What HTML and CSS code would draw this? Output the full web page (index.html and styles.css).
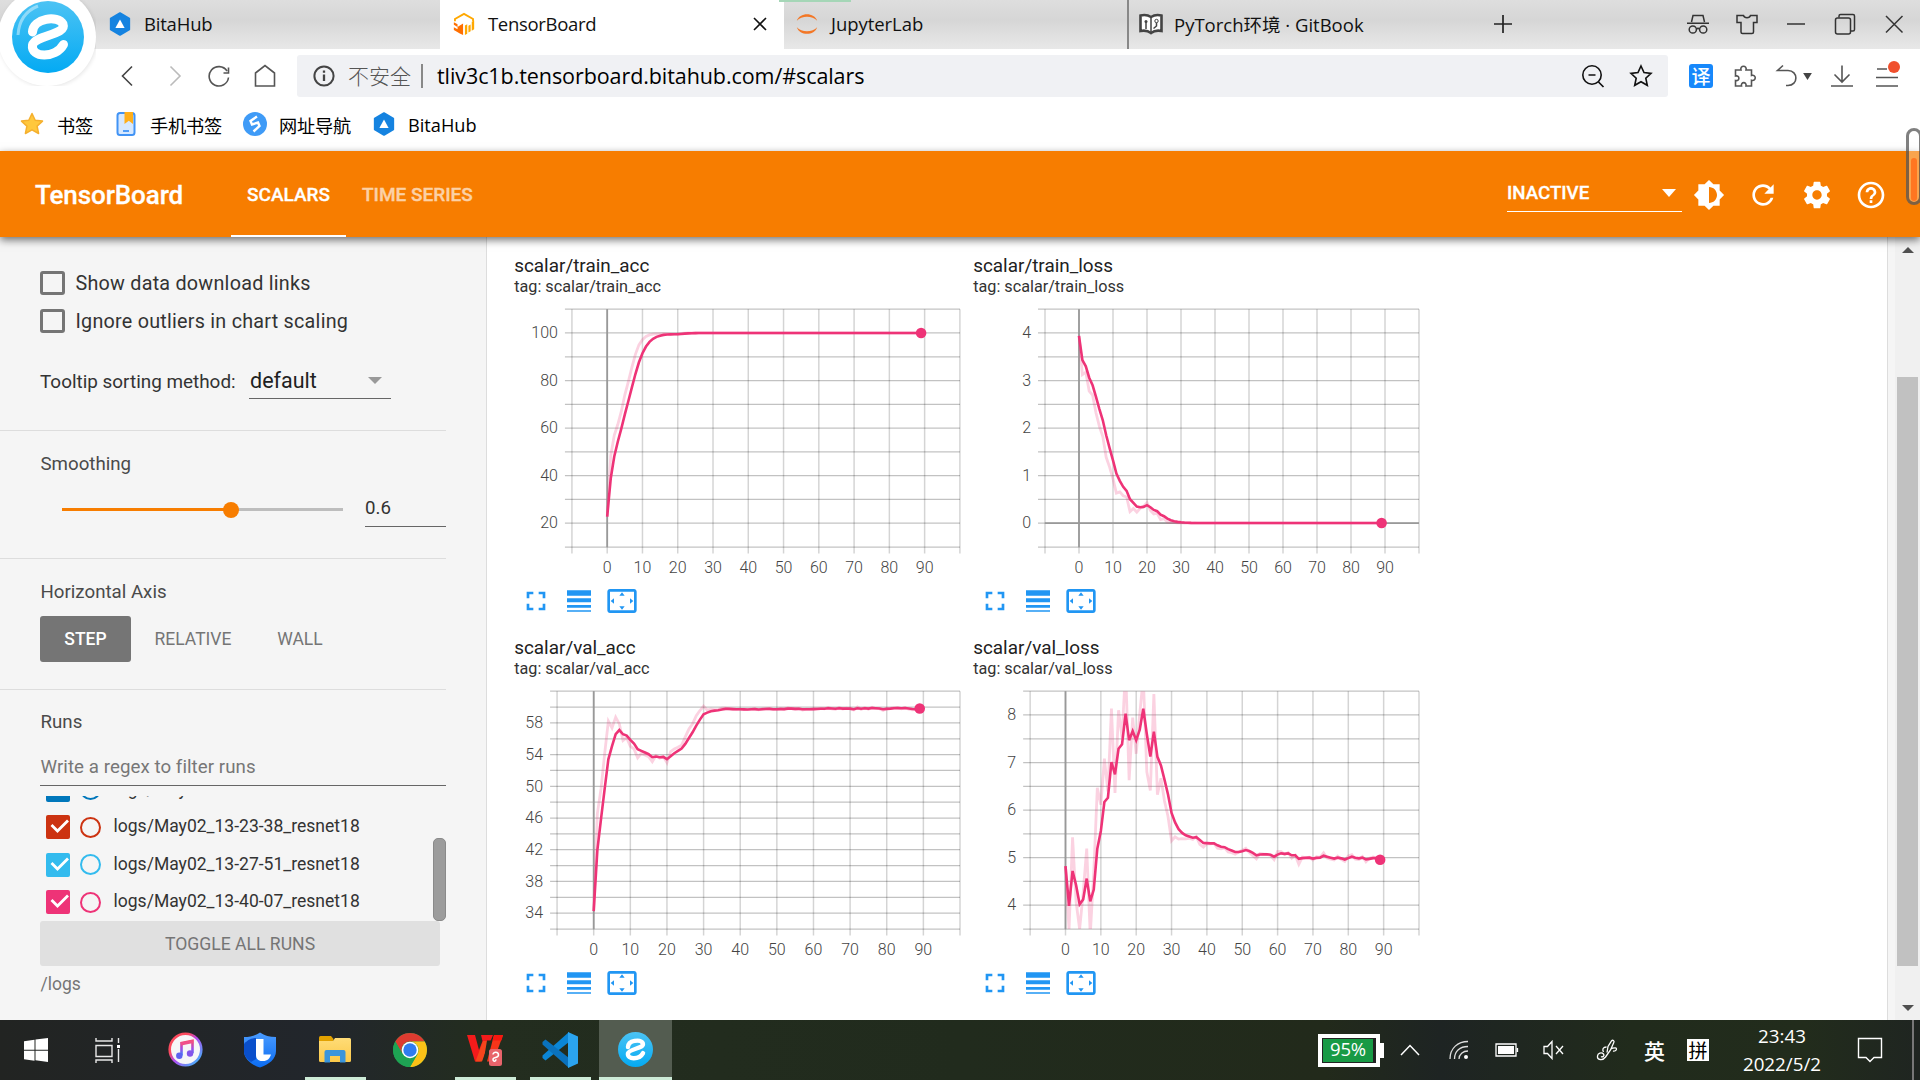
FILE: index.html
```html
<!DOCTYPE html>
<html lang="zh-CN">
<head>
<meta charset="utf-8">
<title>TensorBoard</title>
<link rel="stylesheet" href="styles.css">
</head>
<body>
<svg class="defs" width="0" height="0">
  <defs>
    <linearGradient id="gBlue" x1="0" y1="0" x2="0" y2="1"><stop offset="0" stop-color="#4cc3f4"/><stop offset="1" stop-color="#04aaf3"/></linearGradient>
    <linearGradient id="gMusic" x1="0" y1="0" x2="1" y2="1"><stop offset="0" stop-color="#fb4a5e"/><stop offset=".3" stop-color="#fb4a5e"/><stop offset=".5" stop-color="#b44cf0"/><stop offset="1" stop-color="#2ec5fb"/></linearGradient>
    <linearGradient id="gNote" x1="0" y1="0" x2="0" y2="1"><stop offset="0" stop-color="#f9476a"/><stop offset=".55" stop-color="#a14ce8"/><stop offset="1" stop-color="#2f8df8"/></linearGradient>
    <linearGradient id="gShield" x1="0" y1="0" x2="0" y2="1"><stop offset="0" stop-color="#4a9bff"/><stop offset="1" stop-color="#0b6cf2"/></linearGradient>
    <linearGradient id="gFolder" x1="0" y1="0" x2="0" y2="1"><stop offset="0" stop-color="#ffdc77"/><stop offset="1" stop-color="#fbc94a"/></linearGradient>
  </defs>
  <symbol id="i-full" viewBox="0 0 24 24"><path d="M7 14H5v5h5v-2H7v-3zm-2-4h2V7h3V5H5v5zm12 7h-3v2h5v-5h-2v3zM14 5v2h3v3h2V5h-5z"/></symbol>
  <symbol id="i-lines" viewBox="0 0 24 24"><path d="M3 17h18v-2H3v2zm0 3h18v-1H3v1zm0-7h18v-3H3v3zm0-9v4h18V4H3z"/></symbol>
  <symbol id="i-fit" viewBox="0 0 24 24"><path d="M12.01 5.5L10 8h4l-1.99-2.5zM18 10v4l2.5-1.99L18 10zM6 10l-2.5 2.01L6 14v-4zm8 6h-4l2.01 2.5L14 16zm7-13H3c-1.1 0-2 .9-2 2v14c0 1.1.9 2 2 2h18c1.1 0 2-.9 2-2V5c0-1.1-.9-2-2-2zm0 16.01H3V4.99h18v14.02z"/></symbol>
  <symbol id="i-bita" viewBox="0 0 24 26"><path d="M12 1.2 22 7v12L12 24.8 2 19V7z" fill="#1583e0" stroke="#1583e0" stroke-width="2" stroke-linejoin="round"/><path d="M12 8l5 9.4H7z" fill="#fff"/></symbol>
  <symbol id="i-e" viewBox="0 0 72 72"><circle cx="36" cy="36" r="36" fill="url(#gBlue)"/><path d="M20.500 31C21 17 46 14 51 23 55 34 23 34 20.500 44c-2 13 23 14 31-.5" fill="none" stroke="#fff" stroke-width="9" stroke-linecap="round" stroke-linejoin="round"/></symbol>
</svg>

<div class="screen">
  <header class="tabs">
    <div class="tab tab-first"><svg class="fav" viewBox="0 0 24 26"><use href="#i-bita"/></svg><span>BitaHub</span></div>
    <div class="tab tab-active">
      <svg class="fav" viewBox="0 0 24 26"><path d="M2.200 10V7.500L12 2l9.800 5.500V10" fill="none" stroke="#ffa800" stroke-width="2"/><path d="M1 11l4 2.200v3l2.500-1.700 3.500-2V25l-3.500-1.800L1 19.500v-3l4 2.300v-2.600l-4-2.400z" fill="#ff6f00"/><path d="M13 14.500l2.500-1.300v10.300L13 25zM16.800 15l2.400-1.400v7.200l-2.400 1.500zM20.400 10.500L23 9.200v9.500l-2.600 1.500z" fill="#ffa800"/></svg>
      <span>TensorBoard</span>
      <svg class="tab-close" viewBox="0 0 14 14"><path d="M1 1l12 12M13 1L1 13" stroke="#111" stroke-width="1.6"/></svg>
    </div>
    <div class="tab tab-jupyter"><svg class="fav" viewBox="0 0 24 26"><path d="M1 9.500C4 0 20 0 23 9.500 18 3.800 6 3.800 1 9.500zM1 16.500C4 26 20 26 23 16.500 18 22.200 6 22.200 1 16.500z" fill="#f37726"/></svg><span>JupyterLab</span></div>
    <div class="tab tab-book"><svg class="fav" viewBox="0 0 24 24"><path d="M1.500 3.500c4-1 7.500-.5 10.500 1.500 3-2 6.500-2.500 10.500-1.500v15.500c-4-.8-7.500-.3-10.500 2-3-2.300-6.500-2.800-10.500-2z" fill="#fff" stroke="#444" stroke-width="2.600"/><path d="M12 5v15M7 10v7M17.500 9v5l-3 2.500" stroke="#444" stroke-width="1.500" fill="none"/><circle cx="7" cy="9.500" r="1.500" fill="#444"/><circle cx="17.500" cy="9" r="1.700" fill="#fff" stroke="#444"/></svg><span>PyTorch环境 · GitBook</span></div>
    <div class="tab-new"><svg viewBox="0 0 18 18"><path d="M9 0v18M0 9h18" stroke="#222" stroke-width="1.700"/></svg></div>
    <div class="wincontrols">
      <svg viewBox="0 0 24 24"><g fill="none" stroke="#333" stroke-width="1.500"><path d="M5.500 10 7 3.500h10L18.500 10M1 11.200h22"/><circle cx="6.800" cy="17.500" r="3.600"/><circle cx="17.200" cy="17.500" r="3.600"/><path d="M10.400 17c1-.8 2.200-.8 3.200 0"/></g></svg>
      <svg viewBox="0 0 24 24"><path d="M2 3.500h6.500c1 3 6 3 7 0H22v7h-3.500V20q0 1.500-1.500 1.500H7.500Q6 21.500 6 20v-9.500H2z" fill="none" stroke="#333" stroke-width="1.500"/></svg>
      <svg viewBox="0 0 24 24"><path d="M3 12h18" stroke="#333" stroke-width="1.500"/></svg>
      <svg viewBox="0 0 24 24"><g fill="none" stroke="#333" stroke-width="1.500"><rect x="2.500" y="6" width="15" height="16" rx="2"/><path d="M6 5.500V4q0-1.500 1.500-1.500h12.500q1.500 0 1.500 1.500v13.500q0 1.500-1.500 1.500h-2"/></g></svg>
      <svg viewBox="0 0 24 24"><path d="M4 4l16.500 16.500M20.500 4L4 20.500" stroke="#333" stroke-width="1.500"/></svg>
    </div>
    <i class="load-bar"></i>
  </header>

  <nav class="toolbar">
    <div class="c-back"><svg viewBox="0 0 24 24"><path d="M17 2.500 7.500 12 17 21.500" fill="none" stroke="#444" stroke-width="1.600"/></svg></div>
    <div><svg viewBox="0 0 24 24"><path d="M7.500 2.500 17 12l-9.500 9.500" fill="none" stroke="#bbb" stroke-width="1.600"/></svg></div>
    <div><svg viewBox="0 0 24 24"><path d="M21.500 13.500A9.700 9.700 0 1 1 20 7M21.500 3.500V9h-5" fill="none" stroke="#555" stroke-width="1.600"/></svg></div>
    <div><svg viewBox="0 0 24 24"><path d="M2.500 9 12 1.500 21.500 9v13h-19z" fill="none" stroke="#555" stroke-width="1.600"/></svg></div>
    <div class="urlbar">
      <svg class="info" viewBox="0 0 24 24"><circle cx="12" cy="12" r="9.600" fill="none" stroke="#444" stroke-width="2"/><path d="M12 10.500v6.500M12 6.500v2.200" stroke="#444" stroke-width="2.300"/></svg>
      <span class="insecure">不安全</span><i class="sep"></i><span class="url">tliv3c1b.tensorboard.bitahub.com/#scalars</span>
      <svg class="mag" viewBox="0 0 24 24"><circle cx="11" cy="11" r="9.200" fill="none" stroke="#111" stroke-width="1.600"/><path d="M7.500 11h7M17.500 18l5 5" stroke="#111" stroke-width="1.700"/></svg>
      <svg viewBox="0 0 24 24"><path d="M12 2l3 6.600 7 .8-5.200 4.800 1.500 7.100L12 17.700l-6.300 3.600 1.500-7.100L2 9.400l7-.8z" fill="none" stroke="#111" stroke-width="1.600"/></svg>
    </div>
    <div class="c-trans"><b>译</b></div>
    <div><svg viewBox="0 0 24 24"><path d="M2.500 6H8c-1.500-5 6.500-5 5 0h5.500v5.500c5-1.500 5 6 0 4.800V22H13c1-4.500-5.500-4.500-4.500 0h-6v-5.500c4.500 1 4.500-5.500 0-4.500z" fill="none" stroke="#555" stroke-width="1.600"/></svg></div>
    <div class="c-undo"><svg viewBox="0 0 24 24"><path d="M8 1.500 2.500 6.500H13c10.500 0 10.500 15 0 15H11" fill="none" stroke="#555" stroke-width="1.600"/></svg><svg class="caret" viewBox="0 0 10 8"><path d="M0 0h10L5 8z" fill="#444"/></svg></div>
    <div><svg viewBox="0 0 24 24"><path d="M12 1.500v16M4.500 10.500l7.500 7.500 7.500-7.500M1 22h22" fill="none" stroke="#555" stroke-width="1.600"/></svg></div>
    <div class="c-menu"><svg viewBox="0 0 24 24"><path d="M2 5h10M1 13.500h22M1 22h22" stroke="#555" stroke-width="1.700"/></svg><i class="dot"></i></div>
  </nav>

  <nav class="bookmarks">
    <div class="bm1"><svg viewBox="0 0 24 24"><path d="M12 1.500l3.200 6.700 7.300.9-5.400 5 1.500 7.400L12 17.800l-6.600 3.700 1.500-7.400-5.400-5 7.300-.9z" fill="#ffc83d" stroke="#f5b02e" stroke-width="1.500" stroke-linejoin="round"/></svg><span>书签</span></div>
    <div class="bm2"><svg viewBox="0 0 24 24"><rect x="3.500" y="1" width="17" height="22" rx="2.500" fill="#d6e8ff" stroke="#4193f5" stroke-width="2"/><path d="M10.500 0h8.500v12l-4.200-3.200L10.500 12z" fill="#ffae1a"/><path d="M9 19h6" stroke="#4193f5" stroke-width="1.800"/></svg><span>手机书签</span></div>
    <div class="bm3"><svg viewBox="0 0 24 24"><circle cx="12" cy="12" r="12" fill="#3f9bf7"/><path d="M14 4.500 7.500 9l1.500 3.500 6-2 1.500 3.500-6 5.500" fill="none" stroke="#fff" stroke-width="2.400"/></svg><span>网址导航</span></div>
    <div class="bm4"><svg viewBox="0 0 24 26"><use href="#i-bita"/></svg><span>BitaHub</span></div>
  </nav>

  <header class="tb-header">
    <h1>TensorBoard</h1>
    <div class="tb-tab on"><span>SCALARS</span></div>
    <div class="tb-tab"><span>TIME SERIES</span></div>
    <div class="status"><span>INACTIVE</span><i></i></div>
    <div class="tb-icons">
      <svg viewBox="0 0 24 24"><path d="M20 15.310L23.310 12 20 8.690V4h-4.690L12 .69 8.690 4H4v4.690L.69 12 4 15.310V20h4.690L12 23.310 15.310 20H20v-4.690zM12 18V6c3.310 0 6 2.690 6 6s-2.690 6-6 6z"/></svg>
      <svg viewBox="0 0 24 24"><path d="M17.650 6.350C16.200 4.900 14.210 4 12 4c-4.420 0-7.990 3.580-7.990 8s3.570 8 7.990 8c3.730 0 6.840-2.550 7.730-6h-2.080c-.82 2.330-3.040 4-5.650 4-3.310 0-6-2.690-6-6s2.690-6 6-6c1.660 0 3.140.69 4.220 1.780L13 11h7V4l-2.350 2.350z"/></svg>
      <svg viewBox="0 0 24 24"><path d="M19.430 12.980c.04-.32.07-.64.07-.98s-.03-.66-.07-.98l2.110-1.650c.19-.15.24-.42.12-.64l-2-3.460c-.12-.22-.39-.3-.61-.22l-2.490 1c-.52-.4-1.080-.73-1.690-.98l-.38-2.650C14.460 2.180 14.250 2 14 2h-4c-.25 0-.46.18-.49.42l-.38 2.650c-.61.25-1.170.59-1.690.98l-2.490-1c-.23-.09-.49 0-.61.22l-2 3.460c-.13.22-.07.49.12.64l2.110 1.650c-.04.32-.07.65-.07.98s.03.66.07.98l-2.110 1.650c-.19.15-.24.42-.12.64l2 3.460c.12.22.39.3.61.22l2.490-1c.52.4 1.080.73 1.690.98l.38 2.650c.03.24.24.42.49.42h4c.25 0 .46-.18.49-.42l.38-2.650c.61-.25 1.170-.59 1.690-.98l2.490 1c.23.09.49 0 .61-.22l2-3.460c.12-.22.07-.49-.12-.64l-2.110-1.650zM12 15.500c-1.930 0-3.500-1.570-3.500-3.500s1.570-3.500 3.500-3.500 3.500 1.570 3.500 3.500-1.570 3.500-3.500 3.500z"/></svg>
      <svg viewBox="0 0 24 24"><path d="M11 18h2v-2h-2v2zm1-16C6.480 2 2 6.480 2 12s4.480 10 10 10 10-4.480 10-10S17.520 2 12 2zm0 18c-4.410 0-8-3.590-8-8s3.590-8 8-8 8 3.590 8 8-3.590 8-8 8zm0-14c-2.210 0-4 1.790-4 4h2c0-1.100.9-2 2-2s2 .9 2 2c0 2-3 1.750-3 5h2c0-2.250 3-2.500 3-5 0-2.210-1.790-4-4-4z"/></svg>
    </div>
  </header>

  <main class="tb-body">
    <aside class="side">
      <section class="s-options">
        <label class="check"><i></i><span>Show data download links</span></label>
        <label class="check"><i></i><span>Ignore outliers in chart scaling</span></label>
        <div class="tooltip-row"><span>Tooltip sorting method:</span><div class="select"><span>default</span><i></i></div></div>
      </section>
      <section class="s-smooth">
        <h3>Smoothing</h3>
        <div class="slider-row"><div class="slider"><i class="fill"></i><i class="knob"></i></div><div class="num">0.6</div></div>
      </section>
      <section class="s-axis">
        <h3>Horizontal Axis</h3>
        <div class="modes"><button class="step">STEP</button><button class="rel">RELATIVE</button><button class="wall">WALL</button></div>
      </section>
      <section class="s-runs">
        <h3>Runs</h3>
        <div class="filter">Write a regex to filter runs</div>
        <div class="list-wrap">
          <div class="runs">
            <div class="run blue"><svg viewBox="0 0 24 24"><path d="M5.500 9l6 6L22 4.500"/></svg><i></i><span>logs/May02</span></div>
            <div class="run red"><svg viewBox="0 0 24 24"><path d="M5.500 10l6 6L22 5.500"/></svg><i></i><span>logs/May02_13-23-38_resnet18</span></div>
            <div class="run cyan"><svg viewBox="0 0 24 24"><path d="M5.500 10l6 6L22 5.500"/></svg><i></i><span>logs/May02_13-27-51_resnet18</span></div>
            <div class="run pink"><svg viewBox="0 0 24 24"><path d="M5.500 10l6 6L22 5.500"/></svg><i></i><span>logs/May02_13-40-07_resnet18</span></div>
          </div>
          <i class="thumb"></i>
        </div>
        <button class="toggle">TOGGLE ALL RUNS</button>
        <div class="logdir">/logs</div>
      </section>
    </aside>
    <div class="charts" id="charts"></div>
    <div class="gutter"></div>
    <div class="scroll"><i class="up"></i><i class="bar"></i><i class="down"></i></div>
  </main>

  <footer class="taskbar">
    <div class="apps">
      <div class="app start"><svg width="24" height="24" viewBox="0 0 24 24"><path d="M0 3.200l10.500-1.500v10H0zM11.500 1.600L24 0v11.700H11.500zM0 12.700h10.500v10L0 21.200zM11.500 12.700H24V24l-12.500-1.700z" fill="#fff"/></svg></div>
      <div class="app view"><svg width="26" height="26" viewBox="0 0 26 26"><path d="M2 1v3h16V1M2 8.500h16v11H2zM2 26v-3h16v3M24.500 1v5M24.500 12v13" fill="none" stroke="#e8e8e8" stroke-width="1.400"/><path d="M23 8h3.200v3H23z" fill="#fff"/></svg></div>
      <div class="app"><svg width="35" height="35" viewBox="0 0 35 35"><circle cx="17.500" cy="17.500" r="15.800" fill="#f6f6f8" stroke="url(#gMusic)" stroke-width="2.600"/><path d="M13.500 23.500V11l11-2.200v12.500" fill="none" stroke="url(#gNote)" stroke-width="2.600"/><path d="M13 12l12-2.500" stroke="#f0508a" stroke-width="3"/><circle cx="11.300" cy="23.800" r="3.200" fill="#5e63f0"/><circle cx="22" cy="21.500" r="3.200" fill="#8455ea"/></svg></div>
      <div class="app"><svg width="34" height="36" viewBox="0 0 34 36"><path d="M17 .5c4.500 3 9.500 4.500 16 4.500v14c0 8-7 13.500-16 16.500C8 32.500 1 27 1 19V5C7.500 5 12.500 3.500 17 .5z" fill="url(#gShield)"/><path d="M1 12c3-4 8-6 12-6v21l-5 3C4 27 1 24 1 19z" fill="#0a4fcb"/><path d="M13 7h7.500v15.500H28c-1 4-4 7-9 6.500-4 0-6-2.500-6-6z" fill="#fff"/></svg></div>
      <div class="app open"><svg width="32" height="28" viewBox="0 0 32 28"><path d="M0 1.500Q0 0 1.500 0H12l2.500 3v4H0z" fill="#e2a100"/><path d="M0 5h14l2-3h14.500Q32 2 32 3.500v21q0 1.500-1.500 1.500h-29Q0 26 0 24.500z" fill="url(#gFolder)"/><path d="M5.500 26.500V16q0-2 2-2h17q2 0 2 2v10.500h-5.500V20H11v6.500z" fill="#3a95dc"/></svg></div>
      <div class="app chrome"><svg width="34" height="34" viewBox="0 0 34 34"><circle cx="17" cy="17" r="17" fill="#1ea353"/><path d="M2.300 8.500A17 17 0 0 1 31.700 8.500H17A8.500 8.500 0 0 0 9.600 21.200z" fill="#dd3b30"/><path d="M31.700 8.500A17 17 0 0 1 17 34l7.400-12.800A8.500 8.500 0 0 0 17 8.500z" fill="#fbc117"/><path d="M2.300 8.500 9.600 21.200Q12.500 26 17 25.500L24.400 21.200 17 34A17 17 0 0 1 2.300 8.500z" fill="#1ea353"/><circle cx="17" cy="17" r="8.300" fill="#fff"/><circle cx="17" cy="17" r="6.700" fill="#2f7cf0"/></svg></div>
      <div class="app open"><svg width="36" height="32" viewBox="0 0 36 32"><path d="M0 1h8l4 15 3.500-9-1.500-6h12l-2.500 6-10 20.500H8z" fill="#f31b1b"/><path d="M16 7h6.500L15 27.500H8.500z" fill="#f5451c"/><path d="M20 6.500h5.500l-1.500 8-4.500 13h-3z" fill="#222b1d"/><path d="M27 1h9l-9.500 26.500H20z" fill="#f5351a"/><path d="M27 1h9l-1.500 5.500h-9z" fill="#f8170f"/><rect x="22" y="15" width="13" height="17" rx="2.500" fill="#e8646b"/><path d="M26 20.500c0-3 5.500-3 5.500.5s-5.500 1.500-5.500 4.500c0 2.500 3 2 3-.3" fill="none" stroke="#fff" stroke-width="1.500"/></svg></div>
      <div class="app open"><svg width="36" height="36" viewBox="0 0 36 36"><path d="M27 10 3.500 28.500.5 26v-2.500L27 0z" fill="#0b86d6"/><path d="M27 26 3.500 7.500.5 10v2.500L27 36z" fill="#0a72be"/><path d="M26 0 36 4.500v27L26 36z" fill="#2ba4f0"/></svg></div>
      <div class="app open current"><svg width="35" height="35"><use href="#i-e"/></svg></div>
    </div>
    <div class="tray">
      <div class="meter"><span>95%</span></div>
      <div class="t-chev"><svg width="20" height="12" viewBox="0 0 20 12"><path d="M1 11l9-9.500L19 11" fill="none" stroke="#fff" stroke-width="1.500"/></svg></div>
      <div><svg width="20" height="20" viewBox="0 0 20 20"><path d="M1 19C1 8 9 1.500 19 1.500M5.500 19C5.500 11 11 6.500 19 6.500M10 19c0-4.500 4-8 9-8" fill="none" stroke="#ddd" stroke-width="1.300"/><circle cx="17" cy="17" r="2" fill="#fff"/></svg></div>
      <div><svg width="24" height="14" viewBox="0 0 24 14"><path d="M1 1h20v12H1zM22.500 5v4" fill="none" stroke="#fff" stroke-width="1.300"/><path d="M3 3h16v8H3z" fill="#fff"/></svg></div>
      <div><svg width="22" height="20" viewBox="0 0 22 20"><path d="M1 6.500h3.500L9 1.500v17l-4.500-5H1zM13 6l7 8M20 6l-7 8" fill="none" stroke="#fff" stroke-width="1.300"/></svg></div>
      <div><svg width="22" height="22" viewBox="0 0 22 22"><path d="M11 13.500 12 7.500l3.500-5.500c1.200-1.500 3.200-.3 2.300 1.500L14.500 11 9.500 18c-3 4-8.500 3-8-1 .3-3 4-4 6-2 1.500 2-1 3.500-2.500 2.500M10.500 8C7 8 6 10.500 7.500 13M15.500 9.500c2.500-.5 5-1.500 5 .5 0 1.500-2 2.500-3.500 2" fill="none" stroke="#fff" stroke-width="1.300"/></svg></div>
      <div class="ime">英</div>
      <div class="pin"><b>拼</b></div>
      <div class="clock"><span>23:43</span><span>2022/5/2</span></div>
      <div class="note"><svg width="26" height="26" viewBox="0 0 26 26"><path d="M1.500 1.500h23v19H17l-4 4-4-4H1.500z" fill="none" stroke="#fff" stroke-width="1.400"/></svg></div>
      <i class="peek"></i>
    </div>
  </footer>

  <div class="logo"><svg viewBox="0 0 72 72"><use href="#i-e"/><path d="M6 34C7 18 16 9 26 5" stroke="#c5ecfc" stroke-width="3" fill="none" opacity=".6"/></svg></div>
  <div class="pill"><i></i></div>
</div>
<script src="charts.js"></script>
</body>
</html>
```
FILE: styles.css
```css
* { box-sizing: border-box; }
body { margin: 0; font-family: Roboto, "Noto Sans CJK SC", sans-serif; overflow: hidden; }
svg { display: block; flex: none; }
i { font-style: normal; }
button { font: inherit; color: inherit; border: 0; padding: 0; background: none; }
.defs { position: absolute; }
.screen { position: relative; width: 1920px; height: 1080px; display: flex; flex-direction: column; background: #fff; }

/* browser chrome */
.tabs { position: relative; height: 49px; flex: none; display: grid; grid-template-columns: 440px 344px 343px 345px 202px 246px; background: linear-gradient(#dedede, #d6d6d6 40%, #e8e8e8); font: 18.500px "Open Sans", "Noto Sans CJK SC", sans-serif; color: #111; }
.tab { display: flex; align-items: center; gap: 12px; padding: 0 0 2px 12px; letter-spacing: -.32px; white-space: nowrap; }
.tab-first { padding-left: 108px; gap: 12px; letter-spacing: -.2px; }
.tab-jupyter { padding-left: 11px; letter-spacing: -.05px; }
.tab-active { background: #fff; }
.tab-book { border-left: 2px solid #888; padding-left: 10px; gap: 11px; letter-spacing: 0; }
.fav { width: 24px; height: 24px; }
.tab-close { width: 14px; height: 14px; margin-left: auto; margin-right: 17px; }
.tab-new { display: flex; align-items: center; padding: 0 0 2px 22px; }
.tab-new svg { width: 18px; height: 18px; }
.wincontrols { display: grid; grid-template-columns: repeat(5, 49px); align-items: center; justify-items: center; margin-left: -1px; padding-bottom: 2px; }
.wincontrols svg { width: 24px; height: 24px; }
.load-bar { position: absolute; left: 779px; top: 0; width: 72px; height: 2px; background: #a5d6b7; }

.toolbar { height: 55px; flex: none; display: grid; grid-template-columns: 151px 48px 40px 58px 1371px 57px 40px 56px 42px 48px; align-items: center; padding-bottom: 1px; }
.toolbar > div { display: flex; justify-content: center; align-items: center; }
.toolbar svg { width: 24px; height: 24px; }
.toolbar > .c-back { padding-left: 103px; }
.toolbar > div:nth-child(4) { padding-right: 6px; }
.toolbar > .urlbar { height: 42px; background: #f0f1f4; border-radius: 3px; justify-content: flex-start; padding-left: 15px; color: #000; font: 21.500px "Open Sans", "Noto Sans CJK SC", sans-serif; }
.insecure { margin: -2px 0 0 12px; color: #555; font-size: 21px; font-weight: 300; }
.sep { width: 2px; height: 24px; background: #888; margin: 0 14px 0 10px; }
.url { flex: 1; letter-spacing: -.08px; margin-top: -1px; }
.toolbar .mag { margin-right: 24px; }
.urlbar svg:last-child { margin-right: 15px; }
.c-trans { padding-left: 9px; }
.c-trans b { width: 24px; height: 24px; border-radius: 3px; background: #1788fb; color: #fff; font: 500 19px/24px "Noto Sans CJK SC", sans-serif; text-align: center; }
.c-undo { gap: 4px; }
.toolbar .caret { width: 9px; height: 7px; }
.toolbar .c-menu { position: relative; }
.dot { position: absolute; left: 25px; top: -3px; width: 12px; height: 12px; border-radius: 50%; background: #f0502d; }

.bookmarks { height: 47px; flex: none; display: grid; grid-template-columns: 94px 129px 129px 200px; padding-left: 20px; font: 18.200px "Open Sans", "Noto Sans CJK SC", sans-serif; color: #000; align-items: center; padding-bottom: 10px; }
.bookmarks div { display: flex; align-items: center; gap: 12px; margin-top: 4px; white-space: nowrap; letter-spacing: -.2px; }
.bookmarks svg { width: 24px; height: 24px; margin-top: -1px; }
.bookmarks .bm1 { gap: 13px; }
.bookmarks .bm4 { letter-spacing: 0; }

/* dashboard header */
.tb-header { height: 86px; flex: none; display: flex; align-items: center; background: #f77d00; color: #fff; box-shadow: 0 3px 8px rgba(0,0,0,.55); position: relative; z-index: 2; -webkit-text-stroke: .3px #fff; }
.tb-header h1 { margin: 2px 0 0 35px; width: 196px; font-size: 26px; font-weight: 500; letter-spacing: -.1px; }
.tb-tab { align-self: stretch; display: flex; align-items: center; padding: 0 16px; font-size: 19px; font-weight: 500; }
.tb-tab:not(.on) span { opacity: .65; }
.tb-tab.on { border-bottom: 2px solid #fff; padding-top: 2px; }
.status { margin-left: auto; width: 175px; height: 37px; display: flex; align-items: center; justify-content: space-between; border-bottom: 1.500px solid #fff; font-size: 18.700px; font-weight: 500; padding: 0 6px 1px 0; margin-top: -1px; }
.status i, .select i { border: 7px solid transparent; border-top: 8px solid #fff; border-bottom: 0; }
.tb-icons { display: grid; grid-template-columns: repeat(4, 54px); justify-items: center; margin-right: 22px; margin-top: 2px; }
.tb-icons svg { width: 32px; height: 32px; fill: #fff; }

.tb-body { height: 783px; flex: none; display: grid; grid-template-columns: 487px 1400px 8px 25px; }
.side { background: #f5f5f5; border-right: 1px solid #ddd; color: #333; font-size: 18.700px; }
.side section { width: 446px; padding-left: 40.500px; border-bottom: 1px solid #ddd; }
.side h3 { margin: 0; font-size: 18.700px; font-weight: 400; line-height: 24px; color: #4a4a4a; }
.side .s-options { height: 194px; padding: 27px 0 0 40px; }
.check { display: flex; align-items: center; height: 38px; gap: 10.500px; letter-spacing: .24px; font-size: 19.750px; }
.check i { width: 25px; height: 24px; border: 3px solid #757575; border-radius: 3px; }
.tooltip-row { display: flex; align-items: center; margin-top: 21px; height: 38px; font-size: 18.900px; }
.tooltip-row > span { width: 209px; padding-top: 3px; }
.select { width: 142px; height: 37px; padding: 0 9px 0 1px; display: flex; align-items: center; justify-content: space-between; border-bottom: 1px solid #666; font-size: 21.500px; color: #212121; }
.select i { border-top-color: #999; border-top-width: 7px; margin-top: 2px; }
.select span { padding-top: 1px; }
.s-smooth { height: 128px; padding-top: 21px; }
.slider-row { display: flex; align-items: center; margin-top: 12px; height: 39px; }
.slider { position: relative; width: 281px; height: 3px; background: #bdbdbd; margin: 3px 22px 0 21.500px; }
.slider .fill { display: block; width: 169px; height: 3px; background: #f77d00; }
.slider .knob { position: absolute; left: 161px; top: -6px; width: 16px; height: 16px; border-radius: 50%; background: #f77d00; }
.num { width: 81px; height: 39px; line-height: 40px; border-bottom: 1px solid #666; color: #333; }
.s-axis { height: 131px; padding-top: 21px; }
.modes { display: flex; margin: 12px 0 0 -.5px; height: 46px; font-size: 17.500px; color: #757575; }
.modes .step { width: 91px; background: #757575; color: #fff; border-radius: 3px; font-weight: 500; }
.modes .rel { width: 124px; }
.modes .wall { width: 90px; }
.side .s-runs { border-bottom: 0; padding-top: 20px; }
.filter { margin-left: -.5px; padding-left: .5px; margin-top: 20px; height: 32px; line-height: 26px; border-bottom: 1px solid #666; color: #777; font-size: 18.700px; letter-spacing: .06px; }
.list-wrap { display: flex; justify-content: space-between; align-items: flex-end; height: 125px; margin-top: 10px; }
.runs { height: 125px; overflow: hidden; display: flex; flex-direction: column; justify-content: flex-end; padding-left: 5.500px; }
.run { height: 37.500px; flex: none; display: flex; align-items: center; }
.run svg { width: 24px; height: 24px; border-radius: 2px; background: var(--c); fill: none; stroke: #fff; stroke-width: 2.800; }
.run i { width: 21px; height: 21px; border: 2px solid var(--c); border-radius: 50%; margin: 0 12.500px 0 10px; }
.run span { font-size: 17.550px; margin-top: -2px; }
.blue { --c: #0077bb; } .red { --c: #cc3311; } .cyan { --c: #33bbee; } .pink { --c: #ee3377; }
.thumb { width: 13px; height: 83px; border-radius: 5px; background: #9c9c9c; border: 1px solid #8a8a8a; }
.toggle { display: block; width: 400px; height: 45px; margin-left: -.5px; background: #e0e0e0; border-radius: 3px; color: #757575; font-size: 17.600px; }
.logdir { line-height: 24px; margin-top: 6px; color: #757575; font-size: 17.500px; }

.charts { display: grid; grid-template-columns: 459px 459px; grid-template-rows: 382px 382px; align-content: start; padding: 15px 0 0 28px; overflow: hidden; height: 783px; }
.card h4 { margin: 0 0 0 -.8px; font-weight: 400; font-size: 18.900px; line-height: 28px; height: 26px; color: #212121; }
.card p { margin: 0 0 0 -.8px; font-size: 16.200px; line-height: 18px; height: 22px; color: #333; }
.card .plot { width: 459px; height: 282px; font-size: 16px; font-weight: 300; fill: #444; }
.card .tools { display: flex; gap: 11px; margin: 3px 0 0 5px; }
.card .tools svg { width: 32px; height: 32px; fill: #2196f3; }
.grid-v { stroke: #000; stroke-opacity: .17; stroke-width: 1.500; }
.grid-h { stroke: #000; stroke-opacity: .24; stroke-width: 1.250; }
.zero { stroke: #999; stroke-width: 1.800; }
.raw { fill: none; stroke: #ee3377; stroke-opacity: .22; stroke-width: 2.800; }
.smoothed { fill: none; stroke: #ee3377; stroke-width: 2.600; }
.end { fill: #ee3377; }
.gutter { background: #f5f5f5; border-left: 1px solid #ddd; }
.scroll { background: #f0f0f0; display: flex; flex-direction: column; align-items: center; }
.scroll .up { border: 6px solid transparent; border-top: 0; border-bottom: 6px solid #505050; margin-top: 10px; }
.scroll .bar { width: 21px; height: 589px; background: #c1c1c1; margin-top: 124px; }
.scroll .down { border: 6px solid transparent; border-bottom: 0; border-top: 6px solid #505050; margin-top: 39px; }

/* taskbar */
.taskbar { height: 60px; flex: none; display: flex; justify-content: space-between; background: linear-gradient(90deg, #222422, #22262c 17%, #232d1f 25%, #212b1d 50%, #222a1b 69%, #1e2423 75%, #212b1c 85%, #222c1c 94%, #1f2521); color: #fff; }
.apps { display: flex; margin-left: -1px; }
.app { width: 75px; padding: 0 1px 1px 0; display: flex; align-items: center; justify-content: center; }
.app.start { width: 73px; padding-right: 0; }
.app.view { width: 76px; padding-right: 6px; }
.app.open { background: linear-gradient(#cdebd7, #cdebd7) center bottom / 61px 3px no-repeat; }
.app.current { background: linear-gradient(#cdebd7, #cdebd7) center bottom / 73px 3px no-repeat, linear-gradient(#535c50, #535c50) center / 73px 60px no-repeat; }
.tray { display: grid; grid-template-columns: 68px 48px 50px 45px 50px 56px 39px 48px 118px 60px 20px; }
.tray > div { display: flex; align-items: center; justify-content: center; }
.tray > .meter { position: relative; width: 62px; height: 33px; align-self: center; border: 4px solid #fff; background: linear-gradient(90deg, #189a45 51px, #222 51px); box-shadow: 0 0 0 1px #222 inset; font: 18.500px "Open Sans", sans-serif; padding: 0 2px 3px 0; letter-spacing: -.2px; }
.meter::after { content: ""; position: absolute; right: -8px; top: 5px; width: 4px; height: 15px; background: #fff; }
.ime { font: 500 21px "Noto Sans CJK SC", sans-serif; }
.pin b { width: 22px; height: 22px; background: #fff; color: #000; font: 400 19px/21px "Noto Sans CJK SC", sans-serif; text-align: center; }
.tray > .clock { flex-direction: column; font: 18.800px/28px "Open Sans", sans-serif; letter-spacing: 0; padding-left: 2px; }
.peek { justify-self: start; margin-left: 12px; width: 2px; background: #777; }

/* overlays */
.logo { position: absolute; left: -2px; top: -12px; width: 98px; height: 98px; border-radius: 50%; background: #fff; box-shadow: 1px 1px 4px rgba(0,0,0,.1); padding: 13px 0 0 14px; clip-path: inset(12px 0 0 0); }
.logo svg { width: 72px; height: 72px; }
.pill { position: absolute; left: 1906px; top: 128px; width: 16px; height: 77px; border: 3px solid rgba(60,60,60,.65); border-radius: 8px; background: rgba(255,255,255,.3); clip-path: inset(0 2px 0 0); z-index: 3; }
.pill i { position: absolute; left: 2px; top: 27px; width: 6px; height: 43px; border-radius: 3px; background: #ff7621; }
```
FILE: charts.js
```js
// Exponential smoothing weight used by the dashboard slider.
const W = 0.6;

function smooth(raw) {
  let last = 0;
  return raw.map((v, i) => {
    last = last * W + v * (1 - W);
    return last / (1 - Math.pow(W, i + 1));
  });
}

function unsmooth(s) {
  return s.map((v, i) => {
    const d = 1 - Math.pow(W, i + 1);
    const prev = i ? s[i - 1] * (1 - Math.pow(W, i)) : 0;
    return (v * d - W * prev) / (1 - W);
  });
}

function fillTo(list, tail) {
  const out = list.slice();
  for (let i = 0; out.length < 90; i++) out.push(tail[i % tail.length]);
  return out;
}

const trainAccRaw = fillTo([22.8, 48.4, 57, 61.5, 67, 74, 79.5, 85.5, 91, 95, 97.2, 98.5, 99.2, 99.5, 99.6, 99.6, 99.7, 99.6, 99.5, 99.5, 99.5, 99.8, 99.9], [100]);

const trainLoss = fillTo([3.94, 3.43, 3.3, 3.06, 2.9, 2.655, 2.4, 2.165, 1.85, 1.58, 1.32, 1.045, .89, .765, .68, .505, .427, .35, .336, .343, .38, .336, .28, .252, .182, .147, .098, .063, .042, .028, .02, .014, .01, .007, .006], [.004]);

const valAcc = fillTo([34.25, 41.94, 45.9, 49.7, 53.4, 55.06, 56.57, 57.1, 56.57, 56.4, 55.86, 55.4, 54.68, 54.47, 54.26, 54.05, 53.67, 53.75, 53.67, 53.71, 53.42, 53.8, 54.17, 54.47, 54.76, 55.35, 56.1, 56.82, 57.66, 58.42, 59.1, 59.3, 59.47, 59.55, 59.6, 59.7, 59.77, 59.77, 59.74, 59.72, 59.73, 59.71, 59.7, 59.72, 59.74, 59.7, 59.73, 59.76, 59.77, 59.73, 59.72, 59.76, 59.74, 59.8, 59.8, 59.77, 59.79, 59.72, 59.73, 59.73, 59.74, 59.76, 59.79, 59.78, 59.85, 59.82, 59.78, 59.84, 59.8, 59.82, 59.8, 59.73, 59.84, 59.79, 59.84, 59.8, 59.87, 59.84, 59.82, 59.72, 59.77, 59.8, 59.85, 59.88, 59.84, 59.87, 59.82, 59.75, 59.73, 59.82], [59.82]);

const valLoss = [4.82, 3.985, 4.72, 4.42, 4.02, 4.12, 4.56, 4.08, 4.33, 5.19, 5.56, 6.17, 6.26, 7.01, 6.75, 7.29, 7.385, 8.03, 7.47, 7.66, 7.47, 7.69, 8.13, 7.6, 7.125, 7.65, 7.12, 6.94, 6.64, 6.33, 5.94, 5.74, 5.6, 5.52, 5.47, 5.445, 5.42, 5.43, 5.37, 5.31, 5.305, 5.3, 5.3, 5.26, 5.23, 5.22, 5.18, 5.15, 5.12, 5.12, 5.135, 5.16, 5.14, 5.1, 5.05, 5.065, 5.07, 5.07, 5.06, 5.02, 5.065, 5.09, 5.08, 5.09, 5.05, 5.05, 4.975, 4.99, 4.995, 5, 4.98, 4.995, 5, 5.04, 5.02, 5, 4.98, 5, 4.985, 4.96, 4.99, 5.02, 5, 4.985, 5, 4.965, 4.975, 4.99, 4.99, 4.955];

// x0: position of step 0; dx: width of ten steps; grid/label: spacing in value units.
const charts = [
  { name: 'train_acc', raw: trainAccRaw, line: smooth(trainAccRaw), x0: 92.2, dx: 35.27, right: 445, min: 10, max: 110, grid: 10, label: 20, first: 20 },
  { name: 'train_loss', raw: unsmooth(trainLoss), line: trainLoss, x0: 105, dx: 34, right: 445, min: -.5, max: 4.5, grid: .5, label: 1, first: 0 },
  { name: 'val_acc', raw: unsmooth(valAcc), line: valAcc, x0: 78.7, dx: 36.63, right: 445, min: 32, max: 62, grid: 2, label: 4, first: 34 },
  { name: 'val_loss', raw: unsmooth(valLoss), line: valLoss, x0: 91.5, dx: 35.35, right: 445, min: 3.5, max: 8.5, grid: .5, label: 1, first: 4 }
];

const TOP = 9.2, BOTTOM = 247;

function plot(c, n) {
  const x = s => c.x0 + s * c.dx / 10;
  const y = v => BOTTOM - (v - c.min) / (c.max - c.min) * (BOTTOM - TOP);
  const left = x(-10);
  const path = a => a.map((v, i) => `${x(i).toFixed(2)},${y(v).toFixed(2)}`).join(' ');
  let g = '';
  for (let s = -10; s <= 100; s += 10) {
    g += `<line class="grid-v" x1="${x(s)}" x2="${x(s)}" y1="${TOP}" y2="${BOTTOM + 6.5}"/>`;
    if (s >= 0 && s <= 90) g += `<text x="${x(s)}" y="273" text-anchor="middle">${s}</text>`;
  }
  for (let v = c.min; v <= c.max + 1e-6; v += c.grid)
    g += `<line class="grid-h" x1="${left - 7}" x2="${c.right}" y1="${y(v)}" y2="${y(v)}"/>`;
  for (let v = c.first; v < c.max; v += c.label)
    g += `<text x="${left - 14}" y="${y(v) + 5.2}" text-anchor="end">${v}</text>`;
  g += `<line class="zero" x1="${c.x0}" x2="${c.x0}" y1="${TOP}" y2="${BOTTOM}"/>`;
  if (c.min < 0) g += `<line class="zero" x1="${left}" x2="${c.right}" y1="${y(0)}" y2="${y(0)}"/>`;
  return `<svg class="plot" viewBox="0 0 459 282">
    <clipPath id="clip${n}"><rect x="${left}" y="${TOP}" width="${c.right - left}" height="${BOTTOM - TOP}"/></clipPath>${g}
    <g clip-path="url(#clip${n})"><polyline class="raw" points="${path(c.raw)}"/><polyline class="smoothed" points="${path(c.line)}"/></g>
    <circle class="end" cx="${x(89)}" cy="${y(c.line[89])}" r="5.300"/></svg>`;
}

document.getElementById('charts').innerHTML = charts.map((c, n) => `
  <article class="card">
    <h4>scalar/${c.name}</h4>
    <p>tag: scalar/${c.name}</p>
    ${plot(c, n)}
    <div class="tools"><svg><use href="#i-full"/></svg><svg><use href="#i-lines"/></svg><svg><use href="#i-fit"/></svg></div>
  </article>`).join('');
```
